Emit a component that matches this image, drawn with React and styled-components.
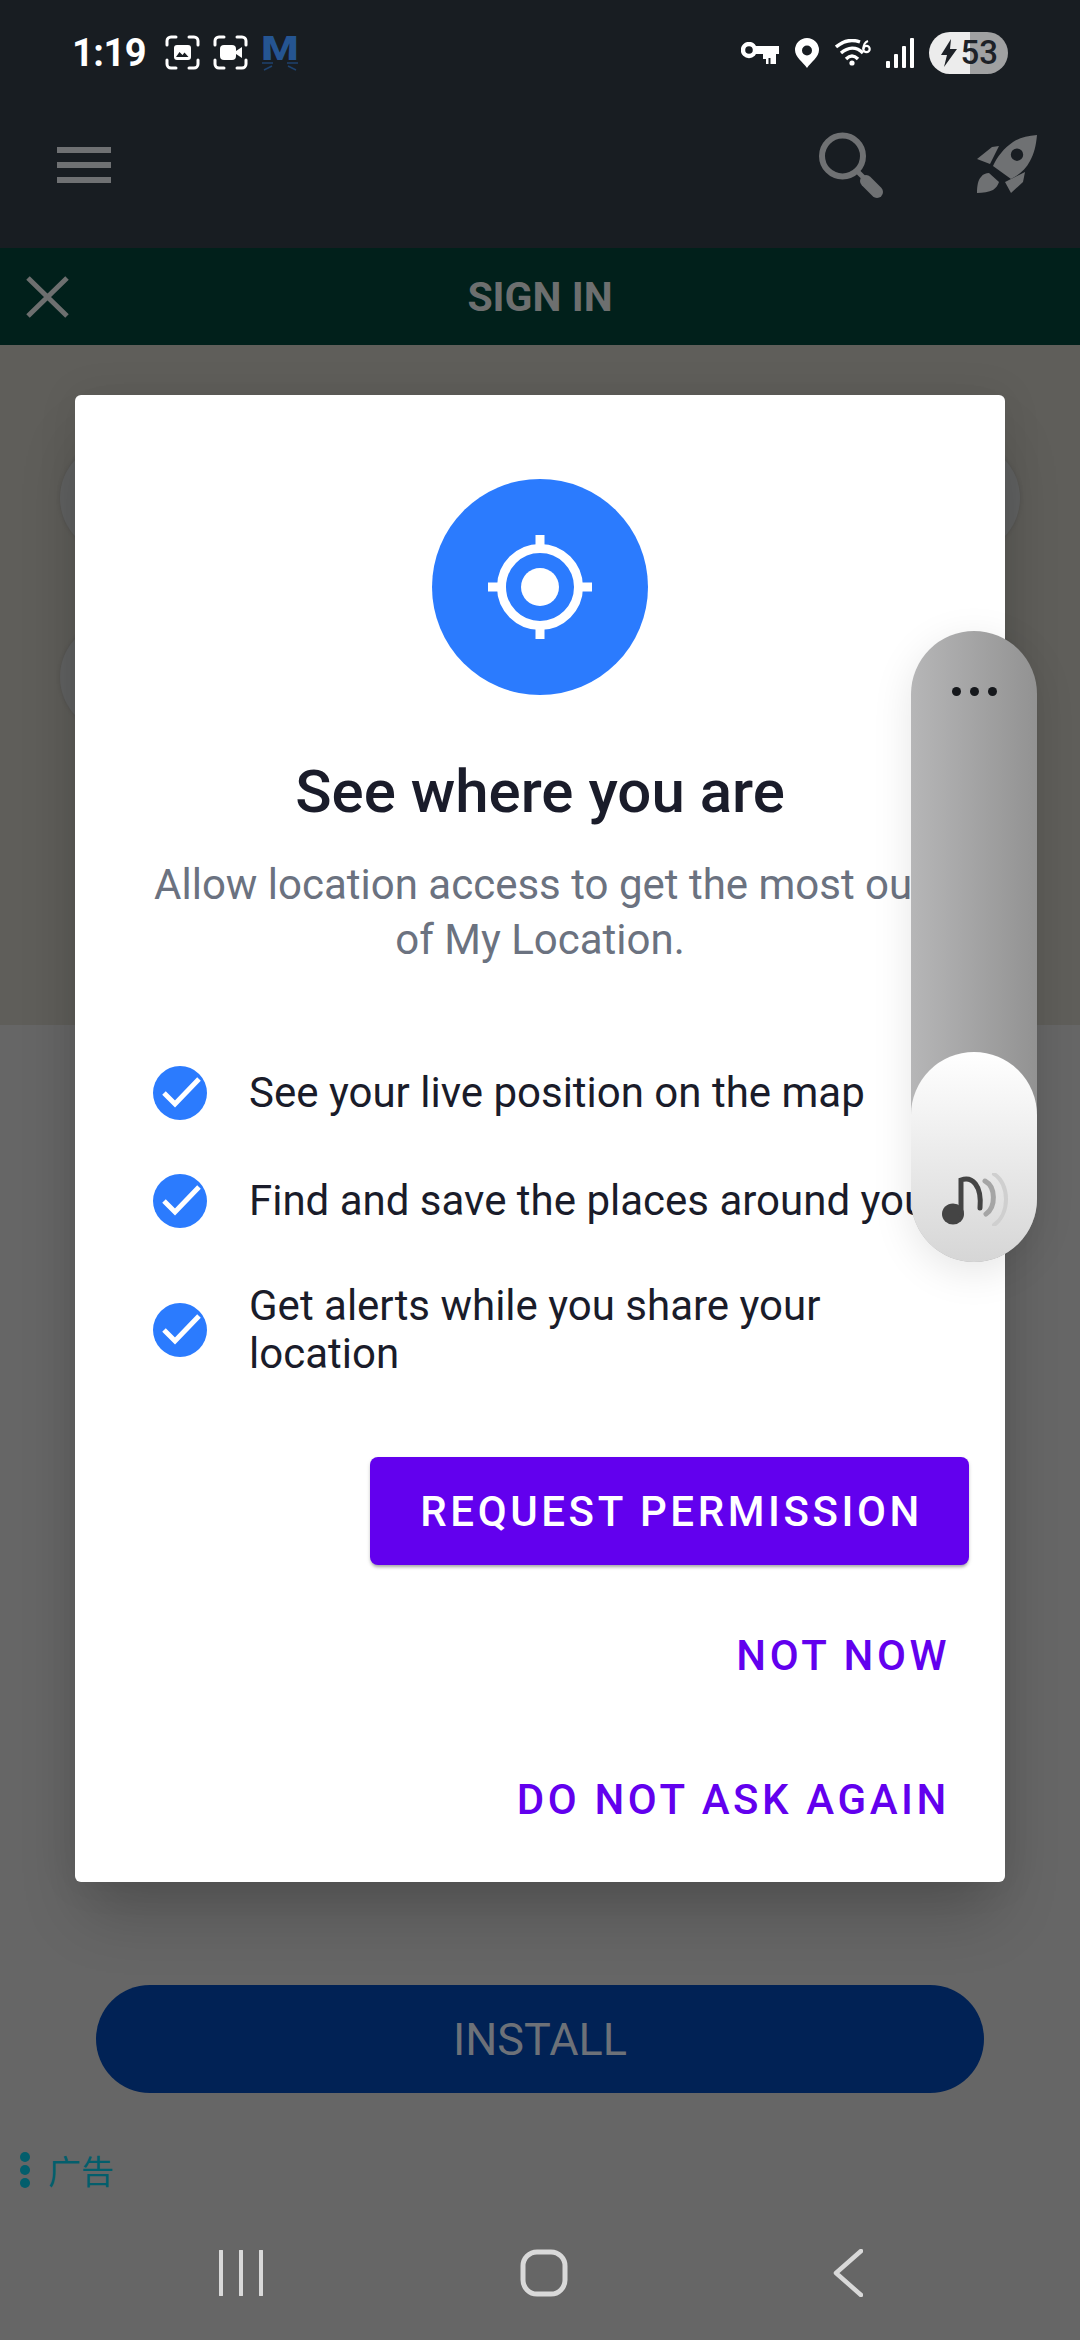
import React from 'react';
import styled, { createGlobalStyle } from 'styled-components';

const GlobalStyle = createGlobalStyle`
  html, body {
    margin: 0;
    padding: 0;
    background: #666666;
    font-family: Roboto, "Noto Sans", sans-serif;
  }
  * { box-sizing: border-box; }
`;

const Screen = styled.div`
  position: relative;
  width: 1080px;
  height: 2340px;
  overflow: hidden;
  display: flex;
  flex-direction: column;
  background: #666666;
`;

const Header = styled.header`
  background: #181d22;
`;

const StatusBar = styled.div`
  height: 105px;
  padding: 0 72px;
  display: flex;
  align-items: center;
  justify-content: space-between;
`;

const StatusGroup = styled.div`
  display: flex;
  align-items: center;
  gap: ${(props) => props.$gap}px;
`;

const Time = styled.span`
  font-size: 38px;
  font-weight: 700;
  color: #ffffff;
  margin-right: 6px;
  letter-spacing: -0.5px;
`;

const Logo = styled.div`
  width: 38px;
  height: 36px;
  display: flex;
  flex-direction: column;
  align-items: center;
`;

const LogoLetter = styled.span`
  font-size: 34px;
  line-height: 26px;
  font-weight: 900;
  color: #255592;
  transform: scaleX(1.25);
`;

const Battery = styled.div`
  width: 79px;
  height: 42px;
  border-radius: 21px;
  display: flex;
  align-items: center;
  justify-content: flex-end;
  gap: 2px;
  padding-right: 10px;
  font-size: 33px;
  font-weight: 500;
  color: #1d2127;
  background: linear-gradient(90deg, #ececec 0 52%, #a0a1a2 52% 100%);
`;

const AppBar = styled.div`
  height: 143px;
  padding: 0 43px 24px 57px;
  display: flex;
  align-items: center;
`;

const MenuIcon = styled.div`
  width: 54px;
  height: 36px;
  margin-right: auto;
  border-top: 6px solid #6f7173;
  border-bottom: 6px solid #6f7173;
  display: flex;
  align-items: center;

  &::before {
    content: '';
    display: block;
    width: 100%;
    height: 6px;
    background: #6f7173;
  }
`;

const AppBarActions = styled.div`
  display: flex;
  align-items: center;
  gap: 92px;
`;

const TitleBar = styled.div`
  height: 97px;
  padding: 0 26px;
  background: #01201b;
  display: grid;
  grid-template-columns: 1fr auto 1fr;
  align-items: center;
`;

const TitleText = styled.div`
  font-size: 41px;
  font-weight: 700;
  color: #6d6f6f;
`;

const FormArea = styled.section`
  height: 680px;
  padding-top: 97px;
  background: #5f5e5a;
  display: flex;
  flex-direction: column;
  gap: 67px;
  align-items: center;
`;

const FormField = styled.div`
  width: 960px;
  height: 112px;
  border-radius: 56px;
  background: #616262;
  box-shadow: 0 0 4px rgba(0, 0, 0, 0.12);
`;

const AdArea = styled.section`
  flex: 1;
  padding-top: 960px;
  background: #666666;
  display: flex;
  flex-direction: column;
  align-items: center;
`;

const InstallButton = styled.div`
  width: 888px;
  height: 108px;
  border-radius: 54px;
  background: #012255;
  color: #6d7178;
  font-size: 45px;
  display: flex;
  align-items: center;
  justify-content: center;
`;

const AdLabel = styled.div`
  align-self: flex-start;
  margin: 56px 0 0 20px;
  display: flex;
  align-items: center;
  gap: 18px;
  color: #035e6c;
  font-size: 33px;
  line-height: 42px;
  font-family: "Noto Sans CJK SC", sans-serif;
`;

const AdDots = styled.div`
  display: flex;
  flex-direction: column;
  gap: 3px;

  span {
    display: block;
    width: 10px;
    height: 10px;
    border-radius: 50%;
    background: #035e6c;
  }
`;

const NavBar = styled.nav`
  align-self: stretch;
  margin-top: 58px;
  padding-left: 218px;
  display: grid;
  grid-template-columns: 302px 313px auto;
  align-items: center;
`;

const Dialog = styled.div`
  position: absolute;
  left: 75px;
  top: 395px;
  width: 930px;
  height: 1487px;
  padding-top: 84px;
  border-radius: 6px;
  background: #ffffff;
  box-shadow: 0 40px 60px -10px rgba(0, 0, 0, 0.2), 0 0 40px rgba(0, 0, 0, 0.08);
  display: flex;
  flex-direction: column;
`;

const IconCircle = styled.div`
  width: 216px;
  height: 216px;
  flex: none;
  align-self: center;
  border-radius: 50%;
  background: #2b7bfe;
  display: flex;
  align-items: center;
  justify-content: center;
`;

const Heading = styled.h2`
  margin: 65px 0 0;
  font-size: 60px;
  line-height: 64px;
  font-weight: 500;
  text-align: center;
  color: #1a1c2a;
`;

const Lead = styled.p`
  margin: 33px 0 0;
  padding: 0 75px;
  font-size: 42px;
  line-height: 55px;
  text-align: center;
  color: #6b7280;
`;

const Benefits = styled.ul`
  list-style: none;
  margin: 99px 0 0;
  padding: 0 55px 0 78px;
  display: flex;
  flex-direction: column;
  gap: 54px;
`;

const Benefit = styled.li`
  display: flex;
  align-items: center;
  gap: 42px;
  font-size: 42px;
  line-height: 48px;
  color: #1a1c2a;
`;

const Actions = styled.div`
  margin-top: auto;
  padding: 0 36px 29px 0;
  display: flex;
  flex-direction: column;
  align-items: flex-end;
  gap: 36px;
`;

const ActionButton = styled.div`
  height: 108px;
  display: flex;
  align-items: center;
  padding: ${(props) => (props.$primary ? '0 46px 0 50px' : '0 19px')};
  border-radius: 8px;
  font-size: 42px;
  font-weight: 500;
  letter-spacing: 3.6px;
  background: ${(props) => (props.$primary ? '#6200ee' : 'transparent')};
  color: ${(props) => (props.$primary ? '#ffffff' : '#6200ee')};
  box-shadow: ${(props) =>
    props.$primary
      ? '0 3px 3px -1px rgba(0,0,0,.25), 0 2px 4px 0 rgba(0,0,0,.14)'
      : 'none'};
`;

const VolumePanel = styled.div`
  position: absolute;
  left: 911px;
  top: 631px;
  width: 126px;
  height: 631px;
  border-radius: 63px;
  background: linear-gradient(90deg, #b6b6b7, #929292);
  box-shadow: 0 10px 40px rgba(0, 0, 0, 0.1);
  display: flex;
  flex-direction: column;
  align-items: center;
  justify-content: space-between;
  padding-top: 56px;
`;

const VolumeDots = styled.div`
  display: flex;
  gap: 9px;

  span {
    display: block;
    width: 9px;
    height: 9px;
    border-radius: 50%;
    background: #16181c;
  }
`;

const VolumeThumb = styled.div`
  width: 126px;
  height: 210px;
  border-radius: 63px;
  background: linear-gradient(180deg, #ffffff, #d6d6d6);
  display: flex;
  align-items: flex-end;
  justify-content: center;
  padding: 0 0 36px 2px;
`;

const ImageCaptureIcon = () => (
  <svg width="35" height="35" viewBox="0 0 35 35" fill="none">
    <path d="M2 10V6a4 4 0 0 1 4-4h5M24 2h5a4 4 0 0 1 4 4v4M33 25v4a4 4 0 0 1-4 4h-5M11 33H6a4 4 0 0 1-4-4v-4" stroke="#fff" strokeWidth="3" strokeLinecap="round" />
    <rect x="9" y="10" width="17" height="15" rx="3" fill="#fff" />
    <path d="M11 22l3.500-5 3 3 2-2.500 4 4.500z" fill="#181d22" />
  </svg>
);

const VideoCaptureIcon = () => (
  <svg width="35" height="35" viewBox="0 0 35 35" fill="none">
    <path d="M2 10V6a4 4 0 0 1 4-4h5M24 2h5a4 4 0 0 1 4 4v4M33 25v4a4 4 0 0 1-4 4h-5M11 33H6a4 4 0 0 1-4-4v-4" stroke="#fff" strokeWidth="3" strokeLinecap="round" />
    <rect x="7" y="10" width="16" height="15" rx="4" fill="#fff" />
    <path d="M23 16l6-4v11l-6-4z" fill="#fff" />
  </svg>
);

const CatLogo = () => (
  <Logo>
    <LogoLetter>M</LogoLetter>
    <svg width="38" height="10" viewBox="0 0 38 10" fill="none">
      <path d="M1 2h11M3 9l8-4M37 2H26M35 9l-8-4" stroke="#1e426f" strokeWidth="1.500" />
    </svg>
  </Logo>
);

const KeyIcon = () => (
  <svg width="38" height="22" viewBox="0 0 38 22" fill="none">
    <circle cx="8" cy="8" r="6" stroke="#fff" strokeWidth="4.400" />
    <path d="M15 4h23v8h-3v10h-10v-5h-3v-5h-7z" fill="#fff" />
    <path d="M28.500 16v6" stroke="#181d22" strokeWidth="2" />
  </svg>
);

const PinIcon = () => (
  <svg width="26" height="30" viewBox="0 0 26 30">
    <path fillRule="evenodd" d="M13 30C9 24 1 19 1 12a12 12 0 0 1 24 0c0 7-8 12-12 18zM13 7.500a5 5 0 1 0 0 10 5 5 0 0 0 0-10z" fill="#fff" />
  </svg>
);

const WifiIcon = () => (
  <svg width="36" height="27" viewBox="0 0 36 27" fill="none">
    <path d="M1 8C8 2 17 0 25 3M6 14c7-6 15-7 22 0M11 20c4-4 8-4 12 0" stroke="#fff" strokeWidth="3.400" />
    <circle cx="17" cy="24" r="2.600" fill="#fff" />
    <circle cx="31.500" cy="10" r="3.200" stroke="#fff" strokeWidth="2.200" />
    <path d="M28.500 10c0-4 1.500-7 4.500-8" stroke="#fff" strokeWidth="2.200" />
  </svg>
);

const SignalIcon = () => (
  <svg width="28" height="30" viewBox="0 0 28 30">
    <g fill="#fff">
      <rect x="0" y="23" width="4" height="7" rx="1" />
      <rect x="8" y="16" width="4" height="14" rx="1" />
      <rect x="16" y="8" width="4" height="22" rx="1" />
      <rect x="24" y="0" width="4" height="30" rx="1" />
    </g>
  </svg>
);

const BoltIcon = () => (
  <svg width="18" height="28" viewBox="0 0 18 28">
    <path d="M11 0L1 16h6L4 28 17 10h-7z" fill="#1d2127" />
  </svg>
);

const SearchIcon = () => (
  <svg width="66" height="66" viewBox="0 0 66 66" fill="none">
    <circle cx="23.500" cy="24" r="20.500" stroke="#6f7173" strokeWidth="6" />
    <path d="M38 39l9 9" stroke="#6f7173" strokeWidth="5" />
    <path d="M47 49l11 11" stroke="#6f7173" strokeWidth="12" strokeLinecap="round" />
  </svg>
);

const RocketIcon = () => (
  <svg width="60" height="60" viewBox="0 0 60 60">
    <g fill="#6f7173">
      <path fillRule="evenodd" d="M60 0C50 1 42 3 36 7 27 13 20 22 16 31l18 13c8-4 15-10 19-18 4-7 6-15 7-26zM40 13.500a6.200 6.200 0 1 0 0 12.400 6.200 6.200 0 0 0 0-12.400z" />
      <path d="M0 24L15 12l7-1-9 18zM0 58c0-7 1-13 4-16 2-3 5-4 8-4l10 9c-1 3-3 6-6 8-4 2-10 3-16 3zM28 47l20-10-2 10-12 11z" />
    </g>
  </svg>
);

const CloseIcon = () => (
  <svg width="43" height="42" viewBox="0 0 43 42" fill="none">
    <path d="M2 2l39 38M41 2L2 40" stroke="#6d6f6f" strokeWidth="5" />
  </svg>
);

const TargetIcon = () => (
  <svg width="106" height="106" viewBox="0 0 106 106" fill="none">
    <circle cx="53" cy="53" r="38.500" stroke="#fff" strokeWidth="9" />
    <circle cx="53" cy="53" r="19" fill="#fff" />
    <path d="M53 1v14M53 91v14M1 53h14M91 53h14" stroke="#fff" strokeWidth="9" />
  </svg>
);

const CheckIcon = () => (
  <svg width="54" height="54" viewBox="0 0 54 54" style={{ flex: 'none' }}>
    <circle cx="27" cy="27" r="27" fill="#2b7bfe" />
    <path d="M11 27l11 11 24-25" fill="none" stroke="#fff" strokeWidth="5" />
  </svg>
);

const MusicIcon = () => (
  <svg width="66" height="53" viewBox="0 0 66 53" fill="none">
    <ellipse cx="11" cy="41" rx="11" ry="10.500" fill="#444" />
    <path d="M19 41V7c11-4 21 5 19 28" stroke="#444" strokeWidth="5" strokeLinecap="round" />
    <path d="M43 8c11 6 11 26 1 33" stroke="#a5a5a5" strokeWidth="5" strokeLinecap="round" />
    <path d="M52 1c16 10 16 40 0 51" stroke="#cfcfcf" strokeWidth="4" strokeLinecap="round" />
  </svg>
);

const NavRecents = () => (
  <svg width="46" height="46" viewBox="0 0 46 46" fill="none">
    <path d="M3 1v44M23 1v44M43 1v44" stroke="#d9d9d9" strokeWidth="4" strokeLinecap="round" />
  </svg>
);

const NavHome = () => (
  <svg width="48" height="48" viewBox="0 0 48 48" fill="none">
    <rect x="3" y="3" width="42" height="42" rx="14" stroke="#d9d9d9" strokeWidth="5" />
  </svg>
);

const NavBack = () => (
  <svg width="30" height="48" viewBox="0 0 30 48" fill="none">
    <path d="M28 2L3 24l25 22" stroke="#d9d9d9" strokeWidth="4.500" strokeLinecap="round" strokeLinejoin="round" />
  </svg>
);

const benefits = [
  'See your live position on the map',
  'Find and save the places around you',
  'Get alerts while you share your location',
];

export default function App() {
  return (
    <Screen>
      <GlobalStyle />
      <Header>
        <StatusBar>
          <StatusGroup $gap={13}>
            <Time>1:19</Time>
            <ImageCaptureIcon />
            <VideoCaptureIcon />
            <CatLogo />
          </StatusGroup>
          <StatusGroup $gap={15}>
            <KeyIcon />
            <PinIcon />
            <WifiIcon />
            <SignalIcon />
            <Battery>
              <BoltIcon />
              53
            </Battery>
          </StatusGroup>
        </StatusBar>
        <AppBar>
          <MenuIcon />
          <AppBarActions>
            <SearchIcon />
            <RocketIcon />
          </AppBarActions>
        </AppBar>
      </Header>
      <TitleBar>
        <CloseIcon />
        <TitleText>SIGN IN</TitleText>
      </TitleBar>
      <FormArea>
        <FormField />
        <FormField />
      </FormArea>
      <AdArea>
        <InstallButton>INSTALL</InstallButton>
        <AdLabel>
          <AdDots>
            <span />
            <span />
            <span />
          </AdDots>
          广告
        </AdLabel>
        <NavBar>
          <NavRecents />
          <NavHome />
          <NavBack />
        </NavBar>
      </AdArea>

      <Dialog>
        <IconCircle>
          <TargetIcon />
        </IconCircle>
        <Heading>See where you are</Heading>
        <Lead>Allow location access to get the most out of My Location.</Lead>
        <Benefits>
          {benefits.map((text) => (
            <Benefit key={text}>
              <CheckIcon />
              <span>{text}</span>
            </Benefit>
          ))}
        </Benefits>
        <Actions>
          <ActionButton $primary>REQUEST PERMISSION</ActionButton>
          <ActionButton>NOT NOW</ActionButton>
          <ActionButton>DO NOT ASK AGAIN</ActionButton>
        </Actions>
      </Dialog>

      <VolumePanel>
        <VolumeDots>
          <span />
          <span />
          <span />
        </VolumeDots>
        <VolumeThumb>
          <MusicIcon />
        </VolumeThumb>
      </VolumePanel>
    </Screen>
  );
}
